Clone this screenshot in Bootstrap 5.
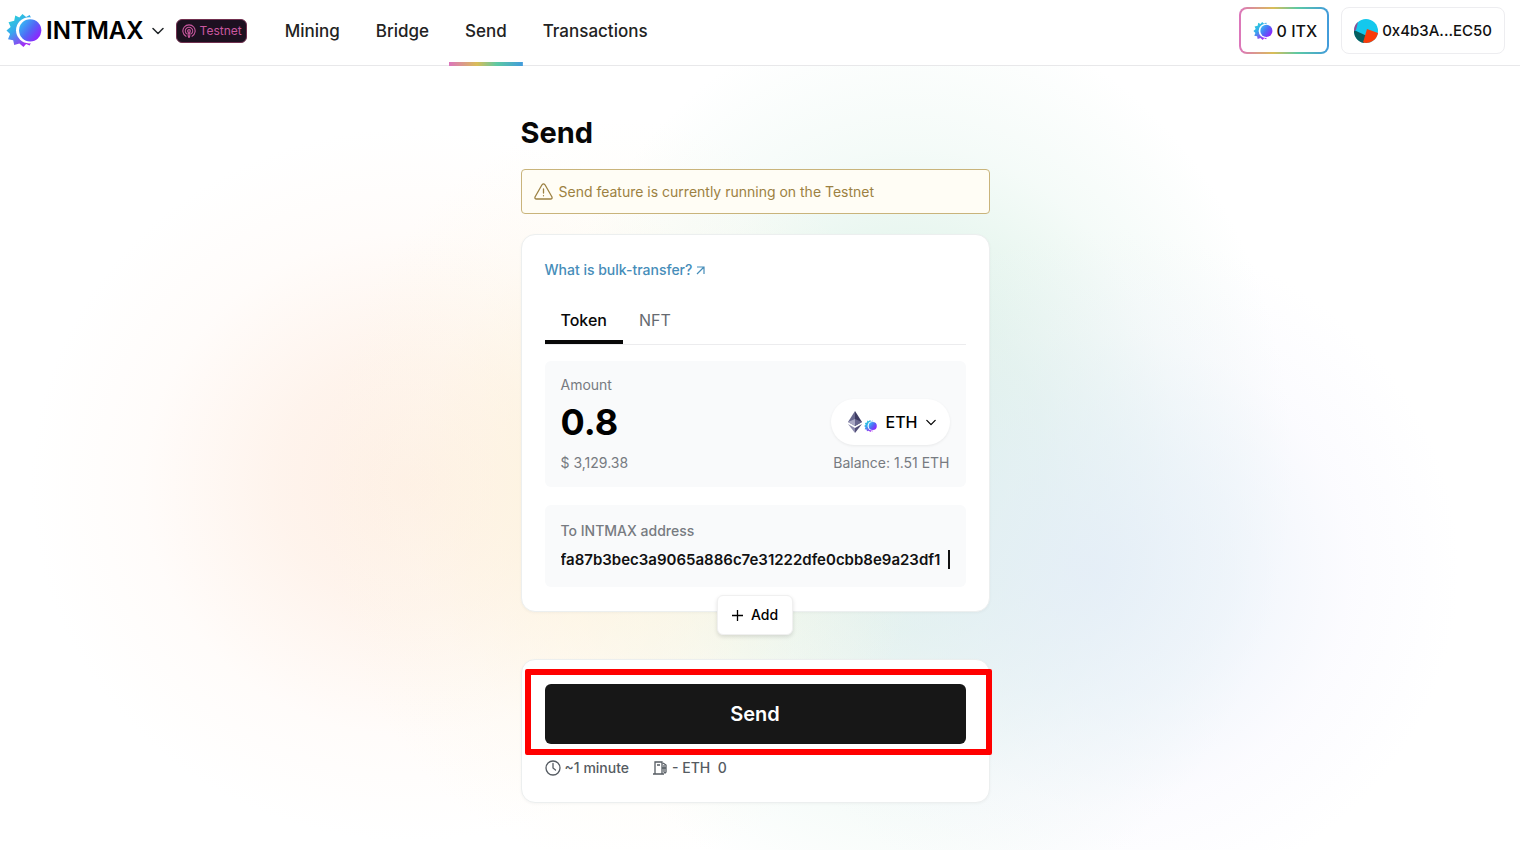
<!DOCTYPE html>
<html lang="en">
<head>
<meta charset="utf-8">
<meta name="viewport" content="width=device-width, initial-scale=1">
<title>INTMAX – Send</title>
<link href="https://cdn.jsdelivr.net/npm/bootstrap@5.3.0/dist/css/bootstrap.min.css" rel="stylesheet">
<style>
:root{--rainbow:linear-gradient(90deg,#dc75bd,#d9bd58 38%,#5cc9a4 65%,#419bdc)}
body{font-family:Inter,"Liberation Sans",sans-serif;font-size:14px;line-height:20px;color:#111;min-height:100vh;
 background:
 radial-gradient(ellipse 20% 44% at 41% 58%,#fdf3d8aa 0,#fdf4dc88 35%,#fdf8e944 70%,#fffdf500 100%),
 radial-gradient(ellipse 25% 42% at 27% 57%,#feede1e6 0,#feeee3aa 35%,#fff3ec44 70%,#fff6f300 100%),
 radial-gradient(ellipse 24% 40% at 72% 67%,#e4edf8d9 0,#e7eff999 38%,#f1f1fd44 70%,#f8f6ff00 100%),
 radial-gradient(ellipse 25% 54% at 60% 55%,#d4efe2f2 0,#d8f0e4cc 35%,#e5f5ee66 70%,#f5fcf900 100%),#fff}
.topbar{height:66px;border-bottom:1px solid #e8e8ea;background:#fff;padding:0 15px 4px 6px}
.brand-word{font-size:24px;font-weight:600;line-height:28px;color:#000}
.testnet{height:24px;padding:0 4px 0 5px;border:1px solid #71304f;border-radius:6px;background:#1d1020;color:#c9579f;font-size:12px;margin-left:12px}
.topnav .nav-link{font-size:17px;font-weight:500;color:#222;height:66px;padding:0 16px 4px;display:flex;align-items:center}
.topnav{gap:4px;margin-left:22px}
.topnav .active{background:var(--rainbow) bottom/100% 4px no-repeat}
.pill-btn{height:47px;border-radius:8px;font-size:16px;font-weight:500;color:#111;background:#fff;border:1px solid #ededf0}
.itx{border:2px solid transparent;background:linear-gradient(#fff,#fff) padding-box,var(--rainbow) border-box;padding:0 10px 0 12px}
.wallet{font-size:15px}
.page{padding-right:10px}
.send-col{max-width:469px;padding-top:47px}
h1{font-size:29px;line-height:40px;font-weight:700;margin:0 0 16px;color:#080808}
.notice{height:45px;border:1px solid #c9b47b;border-radius:4px;background:#fffdf5;color:#9c8142;padding:0 12px;margin-bottom:20px;gap:6px}
.panel{background:#fff;border:1px solid #ecefef;border-radius:14px;padding:24px 23px;box-shadow:0 1px 3px #0000000a}
.transfer{padding-top:25px}
.bulk{color:#468db9;font-weight:500}
.tabs{margin-top:20px;border-bottom:1px solid #ececee}
.tabs button{border:0;background:none;font-size:16px;color:#666a70;height:44px;padding:0 16px 4px}
.tabs .active{color:#080808;font-weight:500;border-bottom:4px solid #080808;padding-bottom:0;margin-bottom:-1px}
.field{background:#f9fafb;border-radius:6px;padding:14px 16px;color:#777b81;margin-top:16px}
.field + .field{margin-top:18px;padding-top:16px}
.field label{display:block;margin-bottom:4px}
.field input{border:0;background:none;padding:0;color:#111;outline:0;display:block}
.field .amount-input{font-size:36px;height:46px;font-weight:700;width:140px;color:#000}
.field .address-input{font-size:15px;font-weight:600;height:28px;width:100%}
.caret{right:0;width:2px;height:19px;top:5px;background:#111}
.coin{height:46px;border:0;border-radius:23px;background:#fff;padding:0 14px 0 15px;font-size:16px;font-weight:500;box-shadow:0 1px 3px #00000012}
.add-btn{width:76px;height:40px;border:1px solid #f0f0f0;border-radius:6px;background:#fff;font-weight:500;box-shadow:0 2px 4px #0000001f;margin:-17px auto 24px;position:relative}
.send-btn{height:60px;border:0;border-radius:6px;background:#171717;color:#fff;font-size:20px;font-weight:600}
.highlight{inset:-15px -26px -11px -20px;border:6px solid #f00;border-radius:2px;pointer-events:none}
.fees{margin-top:14px;color:#555b62;font-weight:500;gap:24px}
</style>
</head>
<body>
<svg width="0" height="0" class="position-absolute" aria-hidden="true">
 <defs>
  <linearGradient id="ray" x1="0" y1="0" x2=".6" y2="1"><stop stop-color="#27e0cf"/><stop offset=".5" stop-color="#36a8ee"/><stop offset="1" stop-color="#a52bf4"/></linearGradient>
  <linearGradient id="orb" x1="0" y1=".1" x2="1" y2=".9"><stop stop-color="#2fc6f4"/><stop offset=".5" stop-color="#5266f6"/><stop offset="1" stop-color="#a210ff"/></linearGradient>
 </defs>
 <symbol id="sun" viewBox="0 0 34 32">
  <path fill="url(#ray)" d="M22.500 1 19 3 15.500 0 12.500 3.500 8.500 1.500 7.500 6.500 2 8 4 12.500 0 16 3.500 19.500 1.500 24.500 6.500 25.500 7.500 30 12.500 28.500 16.500 32 19 29 22.500 30.500 25 25 9 16 25 6Z"/>
  <circle cx="22" cy="15.800" r="12.700" fill="#fff"/>
  <circle cx="23" cy="15.800" r="10.800" fill="url(#orb)"/>
 </symbol>
 <symbol id="chev" viewBox="0 0 12 8"><path d="m1 1.500 5 5 5-5" fill="none" stroke="currentColor" stroke-width="1.500" stroke-linecap="round" stroke-linejoin="round"/></symbol>
</svg>
<header class="topbar d-flex align-items-center">
 <button class="btn p-0 border-0 d-flex align-items-center" type="button" aria-label="INTMAX menu">
  <svg width="36" height="33"><use href="#sun"/></svg>
  <span class="brand-word ms-1 me-2">INTMAX</span>
  <svg width="12" height="8"><use href="#chev"/></svg>
 </button>
 <span class="testnet d-flex align-items-center gap-1">
  <svg width="14" height="14" viewBox="0 0 16 16" fill="none" stroke="currentColor" stroke-width="1.300" stroke-linecap="round"><path d="M4.500 14A7 7 0 1 1 11.500 14M5 11A4.200 4.200 0 1 1 11 11M7 10.500h2v2L8.500 15h-1L7 12.500Z"/><circle cx="8" cy="8" r="1.500"/></svg>Testnet
 </span>
 <nav class="topnav nav flex-nowrap align-self-start">
  <a class="nav-link" href="#">Mining</a><a class="nav-link" href="#">Bridge</a><a class="nav-link active" href="#" aria-current="page">Send</a><a class="nav-link" href="#">Transactions</a>
 </nav>
 <div class="d-flex ms-auto gap-2 ps-3">
  <button class="pill-btn itx d-flex align-items-center gap-1 me-1" type="button"><svg width="20" height="18"><use href="#sun"/></svg>0 ITX</button>
  <button class="pill-btn wallet d-flex align-items-center gap-1 px-2" type="button"><svg class="ms-1" width="24" height="24" viewBox="0 0 24 24"><circle cx="12" cy="12" r="12" fill="#14c8ed"/><path d="M0 11 13 17 10 24A12 12 0 0 1 0 11Z" fill="#075f60"/><path d="m13 10 11 4A12 12 0 0 1 9 23.500Z" fill="#fa3b09"/><path d="M0 12Q0 6 4 3L2 11Z" fill="#944b91"/></svg><span class="me-1">0x4b3A...EC50</span></button>
 </div>
</header>
<div class="page">
<main class="send-col mx-auto">
 <h1>Send</h1>
 <div class="notice d-flex align-items-center" role="status">
  <svg width="19" height="17" viewBox="0 0 19 17" fill="none" stroke="currentColor" stroke-width="1.300" stroke-linecap="round" stroke-linejoin="round"><path d="M8 1.800 1 14Q.5 16 2.500 16h14q2 0 1.500-2L11 1.800Q9.500 0 8 1.800ZM9.500 6v4M9.500 12.700v.1"/></svg>
  Send feature is currently running on the Testnet
 </div>
 <section class="panel transfer">
  <a class="bulk text-decoration-none d-flex align-items-center gap-1" href="#">What is bulk-transfer?<svg width="9" height="9" viewBox="0 0 9 9" fill="none" stroke="currentColor" stroke-width="1.200"><path d="M1 1h7v7M8 1 1 8"/></svg></a>
  <div class="tabs d-flex" role="tablist"><button class="active" type="button" role="tab" aria-selected="true">Token</button><button type="button" role="tab" aria-selected="false">NFT</button></div>
  <div class="field">
   <label for="amount">Amount</label>
   <div class="d-flex justify-content-between align-items-center mb-2">
    <input class="amount-input" id="amount" value="0.8">
    <button class="coin d-flex align-items-center" type="button">
     <svg width="18" height="24" viewBox="0 0 18 24"><path fill="#69698f" d="M9 1 2 12l7 4Z"/><path fill="#3c3a61" d="m9 1 7 11-7 4Z"/><path fill="#aaa9c5" d="m2 12 7-3v7Z"/><path fill="#69678f" d="m16 12-7-3v7Z"/><path fill="#8f8daf" d="m2 14 7 9v-5Z"/><path fill="#514e78" d="m16 14-7 9v-5Z"/></svg>
     <svg class="mt-2" width="13" height="12"><use href="#sun"/></svg>
     <span class="ms-2 me-2">ETH</span><svg width="10" height="7"><use href="#chev"/></svg>
    </button>
   </div>
   <div class="d-flex justify-content-between"><span>$ 3,129.38</span><span>Balance: 1.51 ETH</span></div>
  </div>
  <div class="field">
   <label class="fw-medium" for="address">To INTMAX address</label>
   <div class="position-relative"><input class="address-input" id="address" value="fa87b3bec3a9065a886c7e31222dfe0cbb8e9a23df1"><span class="caret position-absolute"></span></div>
  </div>
 </section>
 <button class="add-btn d-flex align-items-center justify-content-center gap-2" type="button"><svg width="11" height="11" viewBox="0 0 11 11" stroke="currentColor" stroke-width="1.300"><path d="M5.500 0v11M0 5.500h11"/></svg>Add</button>
 <section class="panel">
  <div class="position-relative"><button class="send-btn w-100 d-block" type="button">Send</button><span class="highlight position-absolute"></span></div>
  <div class="fees d-flex">
   <span class="d-flex align-items-center gap-1"><svg width="16" height="16" viewBox="0 0 16 16" fill="none" stroke="currentColor" stroke-width="1.300" stroke-linecap="round"><circle cx="8" cy="8" r="7"/><path d="M8 3.500V8l2.500 2"/></svg>~1 minute</span>
   <span class="d-flex align-items-center gap-1"><svg width="15" height="14" viewBox="0 0 15 14" fill="none" stroke="currentColor" stroke-width="1.300"><path d="M2 13V1h7v12M0 13h11M4 4h3M9 7h2v4q1 2 2 0V4l-3-2M11 4v3h2"/></svg>- ETH&nbsp; 0</span>
  </div>
 </section>
</main>
</div>
<script src="https://cdn.jsdelivr.net/npm/bootstrap@5.3.0/dist/js/bootstrap.bundle.min.js"></script>
</body>
</html>
